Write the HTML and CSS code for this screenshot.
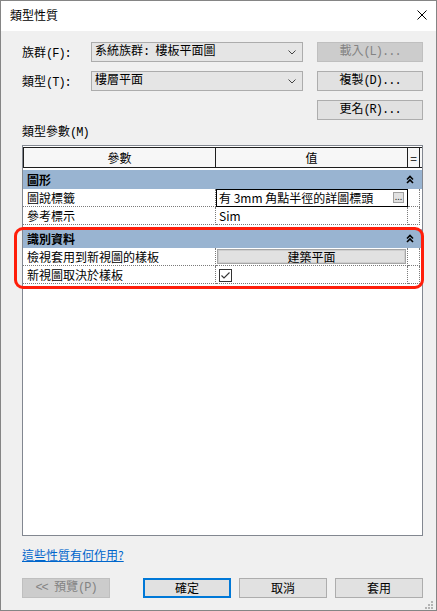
FILE: index.html
```html
<!DOCTYPE html>
<html lang="zh-Hant">
<head>
    <meta charset="UTF-8">
    <title>類型性質</title>
    <link rel="stylesheet" href="styles.css">
</head>
<body>
    <div class="dialog">
        <div class="titlebar">
            <span class="title">類型性質</span>
            <svg class="close" width="10" height="10" viewBox="0 0 10 10">
                <path d="M0.5 0.5 L9.5 9.5 M9.5 0.5 L0.5 9.5" stroke="#000" stroke-width="1"/>
            </svg>
        </div>

        <div class="content">
            <div class="top-grid">
                <span class="ml">族群<span class="hw">(F):</span></span>
                <div class="combo ml">
                    <span>系統族群<span class="hw">: </span>樓板平面圖</span>
                    <svg width="8" height="5" viewBox="0 0 8 5"><polyline points="0.5,0.5 4,4 7.5,0.5" fill="none" stroke="#444"/></svg>
                </div>
                <div class="btn ml disabled">載入<span class="hw">(L)...</span></div>

                <span class="ml">類型<span class="hw">(T):</span></span>
                <div class="combo ml">
                    <span>樓層平面</span>
                    <svg width="8" height="5" viewBox="0 0 8 5"><polyline points="0.5,0.5 4,4 7.5,0.5" fill="none" stroke="#444"/></svg>
                </div>
                <div class="btn ml">複製<span class="hw">(D)...</span></div>

                <div class="btn ml col3">更名<span class="hw">(R)...</span></div>
            </div>

            <div class="section-label ml">類型參數<span class="hw">(M)</span></div>

            <div class="props">
                <div class="prow phead">
                    <div>參數</div>
                    <div>值</div>
                    <div>=</div>
                </div>

                <div class="group">
                    <div class="cat">
                        <span>圖形</span>
                        <svg width="8" height="9" viewBox="0 0 8 9"><path d="M1 4.5 L4 1.5 L7 4.5 M1 8 L4 5 L7 8" fill="none" stroke="#000" stroke-width="1.6"/></svg>
                    </div>
                    <div class="prow data">
                        <div>圖說標籤</div>
                        <div class="edit">
                            <span>有 3mm 角點半徑的詳圖標頭</span>
                            <span class="mini">...</span>
                        </div>
                        <div></div>
                    </div>
                    <div class="prow data">
                        <div>參考標示</div>
                        <div>Sim</div>
                        <div></div>
                    </div>
                </div>

                <div class="group marked">
                    <div class="cat">
                        <span>識別資料</span>
                        <svg width="8" height="9" viewBox="0 0 8 9"><path d="M1 4.5 L4 1.5 L7 4.5 M1 8 L4 5 L7 8" fill="none" stroke="#000" stroke-width="1.6"/></svg>
                    </div>
                    <div class="prow data">
                        <div>檢視套用到新視圖的樣板</div>
                        <div class="btn-cell"><span class="cell-btn">建築平面</span></div>
                        <div></div>
                    </div>
                    <div class="prow data">
                        <div>新視圖取決於樣板</div>
                        <div>
                            <svg class="check" width="13" height="13" viewBox="0 0 13 13">
                                <rect x="0.5" y="0.5" width="12" height="12" fill="#fff" stroke="#333"/>
                                <polyline points="2.5,6.5 5,9 10.5,3.5" fill="none" stroke="#333" stroke-width="1.1"/>
                            </svg>
                        </div>
                        <div></div>
                    </div>
                </div>
            </div>

            <a class="help" href="#">這些性質有何作用?</a>

            <div class="footer">
                <div class="btn ml disabled preview"><span class="hw">&lt;&lt; </span>預覽<span class="hw">(P)</span></div>
                <div class="btn default">確定</div>
                <div class="btn">取消</div>
                <div class="btn">套用</div>
            </div>
        </div>

        <svg class="grip" width="10" height="10" viewBox="0 0 10 10" fill="#b4b4b4">
            <rect x="7" y="1" width="2" height="2"/>
            <rect x="4" y="4" width="2" height="2"/>
            <rect x="7" y="4" width="2" height="2"/>
            <rect x="1" y="7" width="2" height="2"/>
            <rect x="4" y="7" width="2" height="2"/>
            <rect x="7" y="7" width="2" height="2"/>
        </svg>
    </div>
</body>
</html>
```

FILE: styles.css
```css
* {
    box-sizing: border-box;
}

body {
    margin: 0;
    background: #fff;
    font-family: "Noto Sans CJK TC", sans-serif;
    font-size: 12px;
    color: #000;
}

.dialog {
    position: relative;
    width: 437px;
    height: 611px;
    border: 1px solid #858585;
    background: #f0f0f0;
    display: flex;
    flex-direction: column;
}

.titlebar {
    height: 30px;
    flex-shrink: 0;
    background: #fff;
    display: flex;
    align-items: center;
    justify-content: space-between;
    padding: 0 9px;
}

.title {
    line-height: 16px;
    margin-top: -2px;
}

.close {
    margin-top: -2px;
}

.content {
    flex: 1;
    display: flex;
    flex-direction: column;
    padding: 11px 13px 12px 21px;
}

/* MingLiU-like labels: CJK full width, latin half width */
.ml {
    font-family: "Liberation Mono", "Noto Sans CJK TC", monospace;
}

.hw {
    letter-spacing: -1px;
    white-space: pre;
}

.top-grid {
    display: grid;
    grid-template-columns: 55px 212px 1fr;
    grid-auto-rows: 20px;
    column-gap: 14px;
    row-gap: 9px;
    align-items: center;
}

.col3 {
    grid-column: 3;
}

.combo {
    height: 20px;
    border: 1px solid #acacac;
    background: #e5e5e5;
    display: flex;
    align-items: center;
    justify-content: space-between;
    padding: 0 6px 0 3px;
    line-height: 16px;
}

.btn {
    height: 20px;
    border: 1px solid #adadad;
    background: #e1e1e1;
    display: flex;
    align-items: center;
    justify-content: center;
    line-height: 16px;
}

.btn.disabled {
    background: #cccccc;
    border-color: #bfbfbf;
    color: #838383;
}

.btn.default {
    border: 2px solid #0078d7;
}

.section-label {
    margin: 5px 0 4px;
    line-height: 16px;
}

.props {
    flex: 1;
    border: 1px solid #828790;
    background: #fff;
    padding-top: 1px;
}

.prow {
    display: grid;
    grid-template-columns: 193px 192px 12px;
}

.phead {
    height: 21px;
    border-top: 1px solid #1e1e1e;
    border-bottom: 1px solid #1e1e1e;
    background: #f7f7f7;
    margin-bottom: 2px;
}

.phead > div {
    border-right: 1px solid #1e1e1e;
    text-align: center;
    line-height: 19px;
}

.phead > div:first-child {
    border-left: 1px solid #1e1e1e;
}

.group + .group {
    margin-top: 4px;
}

.group.marked {
    position: relative;
}

/* red annotation ring over the identity data group */
.group.marked::after {
    content: "";
    position: absolute;
    top: -2px;
    left: -9px;
    right: -2px;
    bottom: -5px;
    border: 3px solid #ff1e0a;
    border-radius: 9px;
}

.cat {
    height: 19px;
    background: #99b4d1;
    display: flex;
    align-items: center;
    justify-content: space-between;
    padding: 0 8px 0 4px;
    font-weight: bold;
    line-height: 16px;
}

.data {
    height: 18px;
}

.data > div {
    border-right: 1px dotted #7a7a7a;
    border-bottom: 1px dotted #7a7a7a;
    padding-left: 3px;
    line-height: 17px;
    white-space: nowrap;
    overflow: hidden;
}

.data > div:first-child {
    padding-left: 4px;
}

.data > .edit {
    outline: 1px solid #000;
    outline-offset: -1px;
    display: flex;
    align-items: center;
    justify-content: space-between;
    padding-right: 3px;
}

.mini {
    width: 11px;
    height: 11px;
    border: 1px solid #a0a0a0;
    background: #e1e1e1;
    font-size: 9px;
    line-height: 7px;
    text-align: center;
    color: #333;
}

.data > .btn-cell {
    padding: 1px 1px 1px 1px;
}

.cell-btn {
    display: block;
    height: 15px;
    border: 1px solid #a6a6a6;
    box-shadow: inset 0 0 0 1px #cfcfcf;
    background: #e1e1e1;
    text-align: center;
    line-height: 13px;
}

.check {
    display: block;
    margin-top: 3px;
}

.help {
    align-self: flex-start;
    margin-top: 11px;
    line-height: 16px;
    color: #0066cc;
    text-decoration: underline;
}

.footer {
    display: flex;
    gap: 8px;
    margin-top: 15px;
}

.footer .btn {
    width: 88px;
}

.footer .preview {
    margin-right: 25px;
}

.grip {
    position: absolute;
    right: 2px;
    bottom: 0;
}
```
